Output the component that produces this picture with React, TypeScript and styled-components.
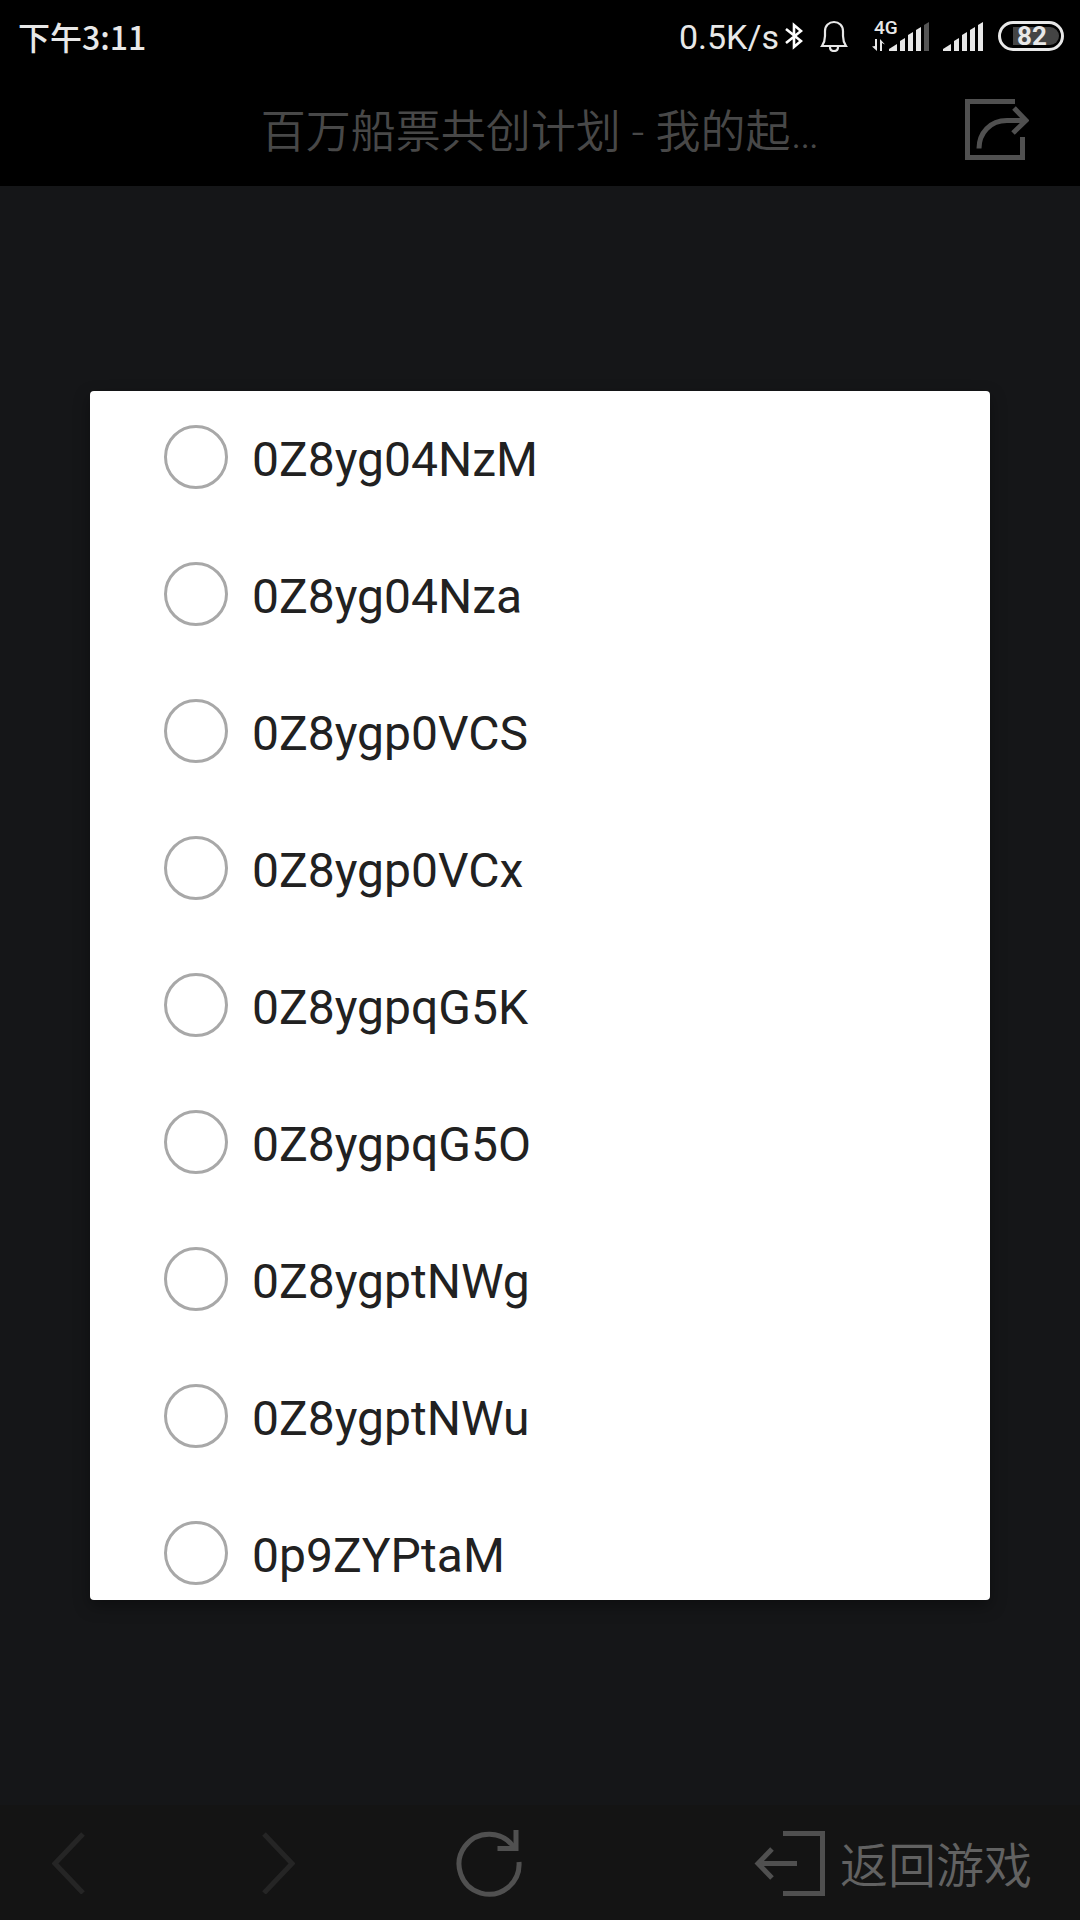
import React, { useState } from "react";
import styled, { createGlobalStyle } from "styled-components";

const GlobalStyle = createGlobalStyle`
  *, *::before, *::after { box-sizing: border-box; }
  body {
    margin: 0;
    background: #151618;
    font-family: Roboto, "Noto Sans CJK SC", sans-serif;
  }
`;

const Page = styled.div`
  display: flex;
  flex-direction: column;
  height: 100vh;
`;

const StatusBar = styled.div`
  display: flex;
  align-items: center;
  justify-content: space-between;
  height: 72px;
  padding: 0 16px 0 18px;
  background: #000;
  color: #e8e8e8;
`;

const Clock = styled.time`
  font-family: "Noto Sans CJK SC", sans-serif;
  font-size: 32px;
  font-weight: 500;
  line-height: 40px;
`;

const StatusIcons = styled.div`
  display: flex;
  align-items: center;
`;

const Speed = styled.span`
  margin-right: 6px;
  padding-top: 2px;
  font-size: 34px;
  line-height: 40px;
`;

const Glyph = styled.svg<{ $gap?: number }>`
  display: block;
  flex: none;
  margin-right: ${(p) => p.$gap ?? 0}px;
`;

const Network = styled.div`
  display: grid;
  margin-right: 14px;
  > * {
    grid-area: 1 / 1;
  }
`;

const NetworkType = styled.span`
  font-size: 19px;
  font-weight: 500;
  line-height: 12px;
  padding: 0 0 0 2px;
`;

const Battery = styled.div`
  display: flex;
  align-items: center;
  justify-content: center;
  width: 66px;
  height: 30px;
  padding: 3px 2px;
  border: 3px solid #e8e8e8;
  border-radius: 15px;
`;

const Charge = styled.span`
  flex: 1;
  margin-left: 10px;
  padding-left: 4px;
  border-radius: 0 9px 9px 0;
  background: #444;
  font-size: 26px;
  font-weight: 700;
  line-height: 18px;
`;

const Header = styled.header`
  display: grid;
  grid-template-columns: 1fr auto 1fr;
  align-items: center;
  height: 114px;
  padding: 0 51px;
  background: #000;
  color: #484848;
`;

const Title = styled.h1`
  grid-column: 2;
  margin: 0;
  padding-top: 8px;
  font-size: 45px;
  font-weight: 350;
  line-height: 60px;
  white-space: nowrap;
`;

const IconButton = styled.button<{ $align?: string }>`
  display: flex;
  align-items: center;
  justify-content: center;
  justify-self: ${(p) => p.$align ?? "stretch"};
  padding: 0;
  border: 0;
  background: none;
  color: #505050;
  font: inherit;
  cursor: pointer;

  &:disabled {
    color: #252525;
    cursor: default;
  }
`;

const Main = styled.main`
  flex: 1;
  display: flex;
  min-height: 0;
  padding: 205px 90px;
`;

const Dialog = styled.div`
  flex: 1;
  overflow: hidden;
  border-radius: 4px;
  background: #fff;
  box-shadow: 0 6px 16px rgba(0, 0, 0, 0.35);
`;

const Options = styled.fieldset`
  display: flex;
  flex-direction: column;
  gap: 73px;
  min-width: 0;
  margin: 0;
  padding: 34px 74px 14px;
  border: 0;
`;

const Option = styled.label`
  display: flex;
  align-items: center;
  gap: 24px;
  height: 64px;
  color: #212121;
  cursor: pointer;
`;

const Radio = styled.input`
  appearance: none;
  flex: none;
  width: 64px;
  height: 64px;
  margin: 0;
  border: 3px solid #a8a8a8;
  border-radius: 50%;

  &:checked {
    background: radial-gradient(#666 0 16px, transparent 17px);
  }
`;

const OptionText = styled.span`
  padding-top: 6px;
  font-size: 48px;
  line-height: 56px;
`;

const Toolbar = styled.nav`
  display: grid;
  grid-template-columns: 138fr 280fr 142fr 520fr;
  height: 115px;
  background: #141414;
`;

const ExitButton = styled(IconButton)`
  justify-content: flex-end;
  gap: 15px;
  padding-right: 48px;
`;

const ExitText = styled.span`
  padding-top: 8px;
  color: #626262;
  font-size: 48px;
  font-weight: 350;
  line-height: 64px;
`;

const codes = [
  "0Z8yg04NzM",
  "0Z8yg04Nza",
  "0Z8ygp0VCS",
  "0Z8ygp0VCx",
  "0Z8ygpqG5K",
  "0Z8ygpqG5O",
  "0Z8ygptNWg",
  "0Z8ygptNWu",
  "0p9ZYPtaM",
];

const bars = [
  "M0 29V27L8 22V29Z",
  "M11 29V19L16 16V29Z",
  "M19 29V13L24 10V29Z",
  "M27 29V8L32 5V29Z",
  "M35 29V3L40 0V29Z",
];

function SignalBars({ level, x = 0 }: { level: number; x?: number }) {
  return (
    <g transform={`translate(${x} 0)`}>
      {bars.map((d, i) => (
        <path key={d} d={d} fill={i < level ? "#e8e8e8" : "#555"} />
      ))}
    </g>
  );
}

export default function App() {
  const [selected, setSelected] = useState("");

  return (
    <Page>
      <GlobalStyle />
      <StatusBar>
        <Clock>下午3:11</Clock>
        <StatusIcons>
          <Speed>0.5K/s</Speed>
          <Glyph $gap={17} width="18" height="28" viewBox="0 0 18 28" fill="none" stroke="#fff" strokeWidth="2.6">
            <path d="M1 7L16 19L9 25V3L16 9L1 21" />
          </Glyph>
          <Glyph $gap={24} width="28" height="32" viewBox="0 0 28 32" fill="none" stroke="#e8e8e8" strokeWidth="2.2">
            <path d="M2 26C4 23 5 20 5 16V11C5 5.500 9 2 14 2S23 5.500 23 11V16C23 20 24 23 26 26Z" />
            <path d="M10 27C10 29.500 11.500 31 14 31S18 29.500 18 27" />
          </Glyph>
          <Network>
            <Glyph width="57" height="29" viewBox="0 0 57 29">
              <path d="M0 24.500L5 29V17H3V24ZM8 17V29H10V21L13 22.500Z" fill="#e8e8e8" />
              <SignalBars level={4} x={17} />
            </Glyph>
            <NetworkType>4G</NetworkType>
          </Network>
          <Glyph $gap={15} width="40" height="29" viewBox="0 0 40 29">
            <SignalBars level={5} />
          </Glyph>
          <Battery>
            <Charge>82</Charge>
          </Battery>
        </StatusIcons>
      </StatusBar>

      <Header>
        <Title>百万船票共创计划 - 我的起…</Title>
        <IconButton $align="end" aria-label="分享">
          <svg width="64" height="62" viewBox="0 0 64 62" fill="none" stroke="currentColor" strokeWidth="5">
            <path d="M50 3.500H2.500V59.500H57.500V39" />
            <path d="M14 50.500C14 35 25 22.500 42 22.500H60" />
            <path d="M49 10L61 22.500L48 35" />
          </svg>
        </IconButton>
      </Header>

      <Main>
        <Dialog role="dialog" aria-label="选项">
          <Options>
            {codes.map((code) => (
              <Option key={code}>
                <Radio
                  type="radio"
                  name="code"
                  value={code}
                  checked={selected === code}
                  onChange={() => setSelected(code)}
                />
                <OptionText>{code}</OptionText>
              </Option>
            ))}
          </Options>
        </Dialog>
      </Main>

      <Toolbar>
        <IconButton disabled aria-label="后退">
          <svg width="34" height="62" viewBox="0 0 34 62" fill="none" stroke="currentColor" strokeWidth="5">
            <path d="M31 2L3 31.500L31 61" />
          </svg>
        </IconButton>
        <IconButton disabled aria-label="前进">
          <svg width="34" height="62" viewBox="0 0 34 62" fill="none" stroke="currentColor" strokeWidth="5">
            <path d="M3 2L31 31.500L3 61" />
          </svg>
        </IconButton>
        <IconButton aria-label="刷新">
          <svg width="66" height="69" viewBox="0 0 66 69" fill="none" stroke="currentColor" strokeWidth="5">
            <path d="M63 34A30 30 0 1 1 58 19.500" />
            <path d="M60 2V20.500H41.500" />
          </svg>
        </IconButton>
        <ExitButton>
          <svg width="71" height="66" viewBox="0 0 71 66" fill="none" stroke="currentColor" strokeWidth="5">
            <path d="M29 3.500H68.500V63.500H29" />
            <path d="M43 33.500H5" />
            <path d="M18 19L4 33.500L18 48" />
          </svg>
          <ExitText>返回游戏</ExitText>
        </ExitButton>
      </Toolbar>
    </Page>
  );
}
